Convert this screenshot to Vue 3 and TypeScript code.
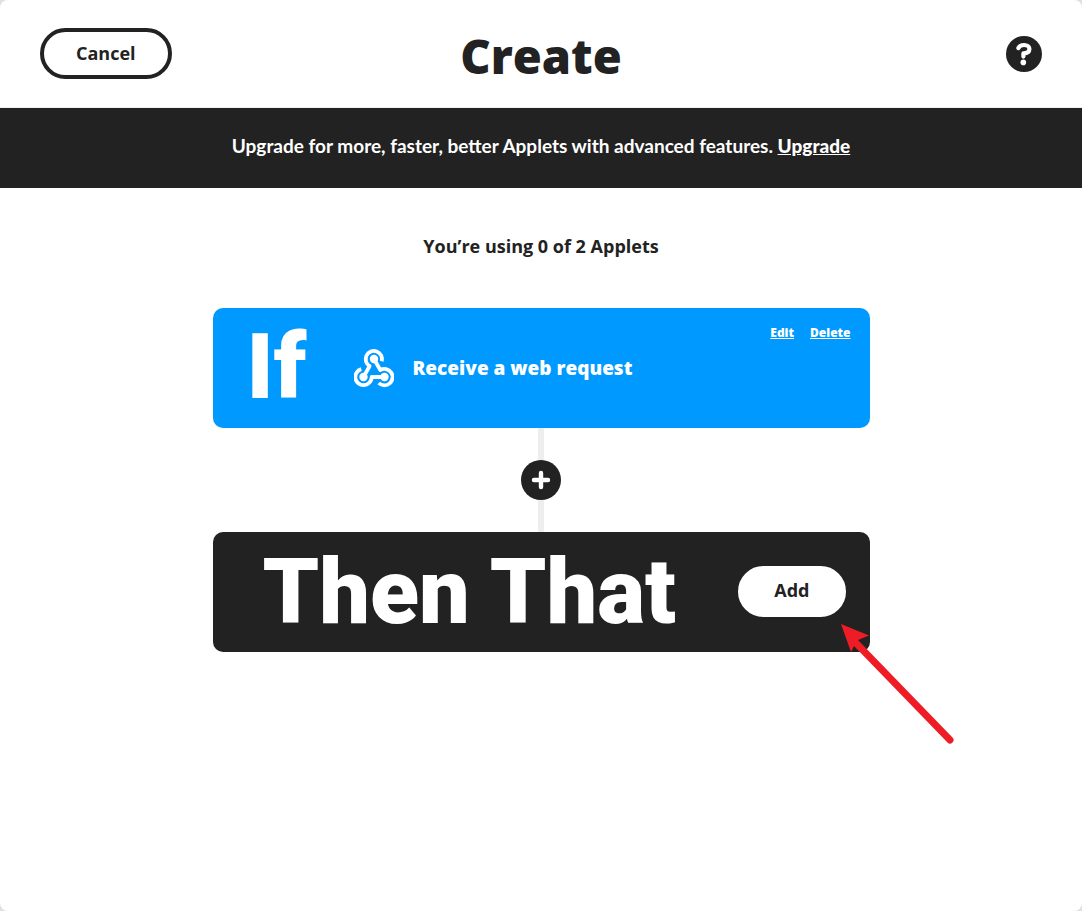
<script setup lang="ts">
import { ref } from 'vue'

const used = ref(0)
const limit = ref(2)
const trigger = ref('Receive a web request')
</script>

<template>
  <div class="page">
    <header class="header">
      <div class="side">
        <button type="button" class="pill cancel">Cancel</button>
      </div>
      <h1 class="title">Create</h1>
      <div class="side end">
        <button type="button" class="round help" aria-label="Help">
          <svg viewBox="0 0 36 36" width="36" height="36" aria-hidden="true">
            <path d="M12.4 12C13.4 10 15.5 9 18.1 9C21.4 9 23.4 10.6 23.4 13C23.4 16 21 17.2 17.4 17.4V20.6" fill="none" stroke="#fff" stroke-width="4.2" stroke-linecap="round" stroke-linejoin="round" />
            <circle cx="17.3" cy="26.4" r="2.8" fill="#fff" />
          </svg>
        </button>
      </div>
    </header>

    <p class="banner">
      Upgrade for more, faster, better Applets with advanced features.
      <a href="#upgrade">Upgrade</a>
    </p>

    <main class="composer">
      <p class="usage">You’re using {{ used }} of {{ limit }} Applets</p>

      <section class="card trigger">
        <h2 class="word">If</h2>
        <svg class="hook" viewBox="0 0 40 40" width="40" height="40" aria-hidden="true">
          <g fill="none" stroke="#fff" stroke-width="3.8" stroke-linejoin="round">
            <path d="M9.5 29L15.6 18.1A8.2 8.2 0 1 1 27.8 13.2" />
            <path d="M20 11L26.3 22A8.2 8.2 0 1 1 24.7 35" />
            <path d="M30.5 29H17.7A8.2 8.2 0 1 1 7.3 21.1" />
          </g>
          <g fill="#fff">
            <circle cx="20" cy="11" r="4.2" />
            <circle cx="9.5" cy="29" r="4.2" />
            <circle cx="30.5" cy="29" r="4.2" />
          </g>
        </svg>
        <span class="name">{{ trigger }}</span>
        <nav class="links">
          <a href="#edit">Edit</a>
          <a href="#delete">Delete</a>
        </nav>
      </section>

      <div class="connector">
        <button type="button" class="round plus" aria-label="Add a step">
          <svg viewBox="0 0 40 40" width="40" height="40" aria-hidden="true">
            <path d="M20 13V27M13 20H27" fill="none" stroke="#fff" stroke-width="4.4" stroke-linecap="round" />
          </svg>
        </button>
      </div>

      <section class="card action">
        <h2 class="word">Then That</h2>
        <button type="button" class="pill add">Add</button>
        <svg class="pointer" viewBox="0 0 116 122" width="116" height="122" aria-hidden="true">
          <path d="M16 19L110 116" stroke="#ee1c25" stroke-width="7" stroke-linecap="round" />
          <path d="M1 0L29 11.5L18 16L15 20L11 28Z" fill="#ee1c25" />
        </svg>
      </section>
    </main>
  </div>
</template>

<style>
html {
  background: #dfe0e4;
}
body {
  margin: 0;
}
</style>

<style scoped>
.page {
  box-sizing: border-box;
  min-height: 100vh;
  border-radius: 8px;
  background: #fff;
  color: #222;
  font-family: "Open Sans", "Noto Sans", sans-serif;
  font-size: 18px;
  font-weight: 700;
}
.header {
  display: flex;
  align-items: center;
  justify-content: space-between;
  box-sizing: border-box;
  height: 108px;
  padding: 0 40px;
  border-bottom: 1px solid #eee;
}
.side {
  display: flex;
  flex: 1;
}
.end {
  justify-content: flex-end;
}
.title {
  margin: 0;
  padding-top: 4px;
  font-size: 47px;
  font-weight: 800;
  line-height: 60px;
}
a {
  color: inherit;
}
.pill {
  display: block;
  box-sizing: border-box;
  height: 51px;
  padding: 0 32px 2px;
  border: 4px solid #222;
  border-radius: 26px;
  background: #fff;
  color: #222;
  font: inherit;
  cursor: pointer;
}
.round {
  display: block;
  padding: 0;
  border: 0;
  border-radius: 50%;
  background: #222;
  cursor: pointer;
}
.round svg {
  display: block;
}
.banner {
  margin: 0;
  padding: 26px 16px 30px;
  background: #222;
  color: #fff;
  font-family: Lato, "Open Sans", sans-serif;
  font-size: 19px;
  line-height: 24px;
  text-align: center;
}
.banner a {
  font-weight: 900;
}
.composer {
  max-width: 657px;
  margin: 0 auto;
  padding: 44px 0 80px;
}
.usage {
  margin: 0 0 48px;
  line-height: 28px;
  text-align: center;
}
.card {
  position: relative;
  display: flex;
  align-items: center;
  box-sizing: border-box;
  min-height: 120px;
  border-radius: 10px;
  color: #fff;
}
.trigger {
  padding: 0 19px 0 34px;
  background: #0099ff;
}
.word {
  margin: 0;
  padding-top: 4px;
  font-family: Roboto, "Open Sans", sans-serif;
  font-size: 90px;
  font-weight: 900;
  line-height: 112px;
}
.trigger .word {
  min-width: 63px;
  padding-bottom: 4px;
}
.hook {
  margin-left: 44px;
}
.name {
  flex: 1;
  margin-left: 19px;
  font-size: 19px;
  font-weight: 800;
  line-height: 28px;
}
.links {
  display: flex;
  gap: 16px;
  align-self: flex-start;
  padding-top: 16px;
  font-size: 12px;
  font-weight: 800;
  line-height: 18px;
}
.connector {
  display: flex;
  align-items: center;
  justify-content: center;
  height: 104px;
  background: linear-gradient(#eee, #eee) center / 6px 100% no-repeat;
}
.action {
  justify-content: space-between;
  padding: 0 24px 2px 50px;
  background: #222;
}
.add {
  border-color: #fff;
}
.pointer {
  position: absolute;
  top: 92px;
  left: calc(100% - 30px);
  pointer-events: none;
}
</style>
